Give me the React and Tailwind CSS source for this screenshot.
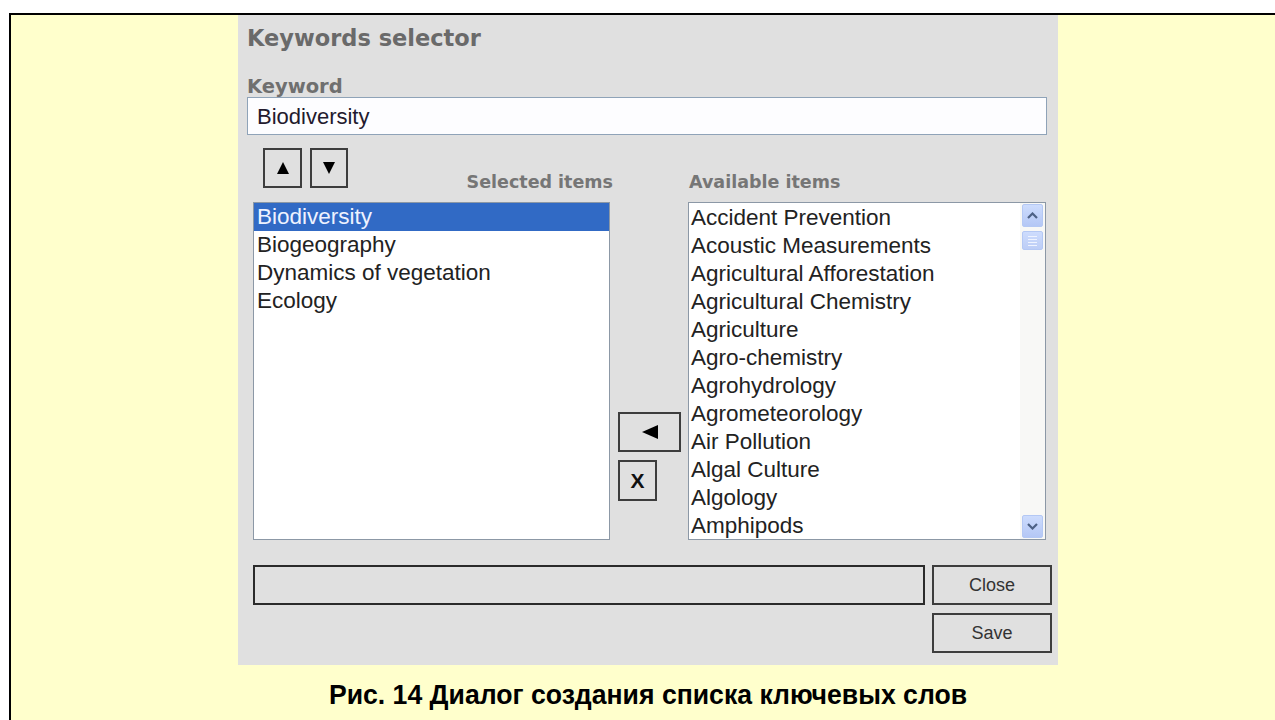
import React from "react";

const selected = ["Biodiversity", "Biogeography", "Dynamics of vegetation", "Ecology"];

const available = [
  "Accident Prevention",
  "Acoustic Measurements",
  "Agricultural Afforestation",
  "Agricultural Chemistry",
  "Agriculture",
  "Agro-chemistry",
  "Agrohydrology",
  "Agrometeorology",
  "Air Pollution",
  "Algal Culture",
  "Algology",
  "Amphipods",
];

const sans = { fontFamily: '"Liberation Sans", Arial, sans-serif' };
const heading = { fontFamily: '"DejaVu Sans", Verdana, sans-serif' };

function Tri({ dir }) {
  const pts =
    dir === "up" ? "6,0 12,12 0,12" : dir === "down" ? "0,0 12,0 6,12" : "0,7 16,0 16,14";
  const w = dir === "left" ? 16 : 12;
  const h = dir === "left" ? 14 : 12;
  return (
    <svg width={w} height={h} viewBox={`0 0 ${w} ${h}`}>
      <polygon points={pts} fill="#000" />
    </svg>
  );
}

function ScrollButton({ up }) {
  return (
    <div className="w-[21px] h-[23px] rounded-[2px] border border-[#b4c8f4] bg-gradient-to-b from-[#cddcfd] to-[#b4c7f5] flex items-center justify-center">
      <svg width="11" height="7" viewBox="0 0 11 7">
        <polyline
          points={up ? "1,6 5.5,1.5 10,6" : "1,1 5.5,5.5 10,1"}
          fill="none"
          stroke="#4d6185"
          strokeWidth="2.2"
        />
      </svg>
    </div>
  );
}

export default function App() {
  return (
    <div className="min-h-screen bg-white pt-[13px] pl-[9px] overflow-hidden">
      <div className="h-[707px] border-l-2 border-t-2 border-black bg-[#ffffcc] flex flex-col">
        {/* dialog */}
        <div className="ml-[227px] w-[820px] h-[650px] bg-[#e0e0e0] flex flex-col">
          <div
            className="ml-[9px] mt-[9px] leading-[28px] text-[22.5px] font-bold text-[#6a6a6a]"
            style={heading}
          >
            Keywords selector
          </div>
          <div
            className="ml-[9px] mt-[25px] leading-[20px] text-[19.5px] font-bold text-[#6f6f6f]"
            style={heading}
          >
            Keyword
          </div>
          <div
            className="ml-[9px] w-[800px] h-[38px] bg-[#fdfdff] border border-[#8fa3b8] flex items-center pl-[9px] text-[22px] text-[#231a2e]"
            style={sans}
          >
            Biodiversity
          </div>

          {/* order buttons and column captions */}
          <div className="mt-[13px] h-[54px] flex">
            <div className="ml-[15px] w-[357px] flex">
              <div className="ml-[10px] w-[39px] h-[40px] border-2 border-[#3d3d3d] flex items-center justify-center">
                <Tri dir="up" />
              </div>
              <div className="ml-[8px] w-[38px] h-[40px] border-2 border-[#3d3d3d] flex items-center justify-center">
                <Tri dir="down" />
              </div>
              <div
                className="ml-auto -mr-[3px] mt-[24px] leading-[20px] text-[17.5px] font-bold text-[#767676]"
                style={heading}
              >
                Selected items
              </div>
            </div>
            <div
              className="ml-[79px] mt-[24px] leading-[20px] text-[17.5px] font-bold text-[#767676]"
              style={heading}
            >
              Available items
            </div>
          </div>

          {/* lists */}
          <div className="h-[338px] flex" style={sans}>
            <div className="ml-[15px] w-[357px] h-full bg-white border border-[#8c98a6] text-[22.5px] leading-[28px] text-[#222]">
              {selected.map((s, i) => (
                <div
                  key={s}
                  className={
                    i === 0 ? "h-[28px] pl-[3px] bg-[#316ac5] text-[#eef2ff]" : "h-[28px] pl-[3px]"
                  }
                >
                  {s}
                </div>
              ))}
            </div>

            <div className="w-[78px] flex flex-col">
              <div className="ml-[8px] mt-[210px] w-[63px] h-[40px] border-2 border-[#3d3d3d] flex items-center justify-center">
                <Tri dir="left" />
              </div>
              <div className="ml-[8px] mt-[8px] w-[39px] h-[41px] border-2 border-[#3d3d3d] flex items-center justify-center text-[21px] font-bold text-[#111]">
                X
              </div>
            </div>

            <div className="w-[358px] h-full bg-white border border-[#8c98a6] flex">
              <div className="flex-1 pt-px text-[22.5px] leading-[28px] text-[#222]">
                {available.map((s) => (
                  <div key={s} className="h-[28px] pl-[2px] whitespace-nowrap">
                    {s}
                  </div>
                ))}
              </div>
              <div className="w-[25px] bg-[#f8f8f6] flex flex-col items-center pt-px pb-px">
                <ScrollButton up />
                <div className="mt-[4px] w-[21px] h-[19px] rounded-[2px] border border-[#b4c8f4] bg-gradient-to-b from-[#cddcfd] to-[#bccdf6] flex flex-col items-center justify-center gap-[2px]">
                  <div className="w-[9px] h-px bg-[#eef3ff]" />
                  <div className="w-[9px] h-px bg-[#eef3ff]" />
                  <div className="w-[9px] h-px bg-[#eef3ff]" />
                  <div className="w-[9px] h-px bg-[#eef3ff]" />
                </div>
                <div className="flex-1" />
                <ScrollButton />
              </div>
            </div>
          </div>

          {/* status line and actions */}
          <div className="mt-[25px] flex" style={sans}>
            <div className="ml-[15px] w-[672px] h-[40px] border-2 border-[#2b2b2b]" />
            <div className="ml-[7px] w-[120px] flex flex-col gap-[8px]">
              <div className="h-[40px] border-2 border-[#3d3d3d] flex items-center justify-center text-[18px] text-[#333]">
                Close
              </div>
              <div className="h-[40px] border-2 border-[#3d3d3d] flex items-center justify-center text-[18px] text-[#333]">
                Save
              </div>
            </div>
          </div>
        </div>

        <div
          className="ml-[227px] w-[820px] mt-[15px] leading-[30px] text-center text-[28px] font-bold text-black scale-x-95"
          style={sans}
        >
          Рис. 14 Диалог создания списка ключевых слов
        </div>
      </div>
    </div>
  );
}
